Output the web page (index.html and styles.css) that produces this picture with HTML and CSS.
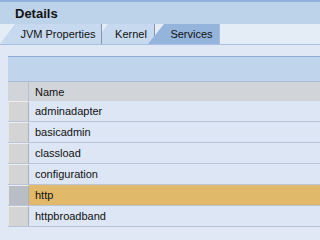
FILE: index.html
```html
<!DOCTYPE html>
<html>
<head>
<meta charset="utf-8">
<link rel="stylesheet" href="styles.css">
</head>
<body>
<div class="page">
  <div class="title">Details</div>
  <div class="tabs">
    <div class="tab tab-jvm">JVM Properties</div>
    <div class="tab tab-kernel">Kernel</div>
    <div class="tab tab-services active">Services</div>
  </div>
  <div class="strip"></div>
  <div class="content">
    <div class="table">
      <div class="toolbar"></div>
      <div class="row head">
        <div class="sel"></div>
        <div class="cell">Name</div>
      </div>
      <div class="row"><div class="sel"></div><div class="cell">adminadapter</div></div>
      <div class="row"><div class="sel"></div><div class="cell">basicadmin</div></div>
      <div class="row"><div class="sel"></div><div class="cell">classload</div></div>
      <div class="row"><div class="sel"></div><div class="cell">configuration</div></div>
      <div class="row selected"><div class="sel"></div><div class="cell">http</div></div>
      <div class="row"><div class="sel"></div><div class="cell">httpbroadband</div></div>
    </div>
  </div>
</div>
</body>
</html>
```

FILE: styles.css
```css
html, body {
  margin: 0;
  padding: 0;
}
body {
  min-height: 100vh;
  overflow: hidden;
  background: #dfe8f4;
  font-family: "Liberation Sans", Arial, sans-serif;
  color: #111;
}
.page {
  min-width: 232px;
}
.title {
  height: 21px;
  padding-top: 1px;
  padding-left: 15px;
  border-top: 2px solid #8fb0da;
  background: #bdd3ea;
  font-size: 13px;
  font-weight: bold;
  line-height: 22px;
  color: #111;
}
.tabs {
  display: flex;
  height: 20px;
  background: #e4ecf6;
  border-bottom: 1px solid #a9c1e0;
}
.tab {
  position: relative;
  box-sizing: border-box;
  height: 20px;
  padding-left: 15px;
  display: flex;
  justify-content: center;
  font-size: 11px;
  line-height: 20px;
  white-space: nowrap;
  background: #c6d9ef;
  border-right: 1px solid #8797ab;
  clip-path: polygon(0 100%, 15px 0, 100% 0, 100% 100%);
}
.tab-jvm {
  width: 102px;
  z-index: 2;
}
.tab-kernel {
  width: 62px;
  margin-left: -9px;
  z-index: 1;
}
.tab-services {
  width: 72px;
  margin-left: -7px;
  z-index: 3;
  padding-left: 16px;
  clip-path: polygon(0 100%, 16px 0, 100% 0, 100% 100%);
  border-right: 1px solid #a9bedb;
}
.tab.active {
  background: #94b4dc;
}
.strip {
  height: 11px;
  background: #dfe8f4;
}
.content {
  padding-left: 8px;
}
.table {
  border-top: 1px solid #8eabd3;
}
.toolbar {
  height: 24px;
  background: #c0d4eb;
  border-bottom: 1px solid #a8bcd8;
}
.row {
  display: flex;
  height: 20px;
  border-bottom: 1px solid #b9c5d6;
  background: #dce6f4;
}
.row.head {
  height: 19px;
  border-bottom: none;
  background: #d1d5d9;
}
.sel {
  box-sizing: border-box;
  width: 21px;
  height: 100%;
  background: #d4d4d4;
  border-top: 1px solid #eeeeee;
  border-left: 1px solid #e6e6e6;
  border-right: 1px solid #a9b2bf;
}
.row.head .sel {
  background: #d1d5d9;
  border-top: none;
  border-left: none;
  border-right: 1px solid #b9bfc6;
}
.row.selected {
  background: #e1b96b;
}
.row.selected .sel {
  background: #b9bec6;
}
.cell {
  flex: 1;
  padding-left: 6px;
  font-size: 11px;
  line-height: 20px;
  white-space: nowrap;
}
```
